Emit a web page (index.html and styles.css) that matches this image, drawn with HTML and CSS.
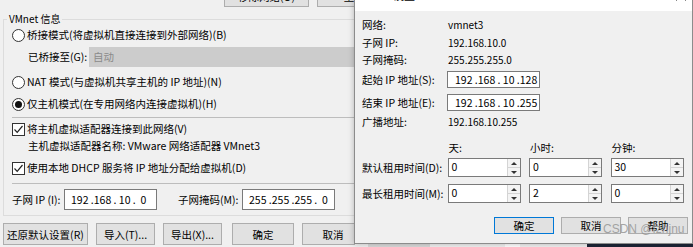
FILE: index.html
```html
<!DOCTYPE html>
<html lang="zh-CN">
<head>
    <meta charset="UTF-8">
    <meta name="viewport" content="width=device-width, initial-scale=1.0">
    <link rel="stylesheet" href="styles.css">
    <title>虚拟网络编辑器 - DHCP 设置</title>
</head>
<body>
    <div class="editor">
        <div class="top-buttons">
            <button class="btn top-btn">移除网络(O)</button>
            <button class="btn top-btn">重命名</button>
        </div>

        <fieldset class="group">
            <legend>VMnet 信息</legend>
            <div class="row opt-row">
                <span class="radio"></span>桥接模式(将虚拟机直接连接到外部网络)(B)
            </div>
            <div class="row bridged-row">
                <span class="bridged-label">已桥接至(G):</span>
                <div class="select">自动</div>
            </div>
            <div class="row opt-row nat-row">
                <span class="radio"></span>NAT 模式(与虚拟机共享主机的 IP 地址)(N)
            </div>
            <div class="row opt-row host-row">
                <span class="radio on"></span>仅主机模式(在专用网络内连接虚拟机)(H)
            </div>
            <div class="sep sep-a"></div>
            <div class="row opt-row cb-row">
                <span class="check"><svg width="11" height="11" viewBox="0 0 11 11"><polyline points="1.5,5.5 4.2,8.3 9.5,2" fill="none" stroke="#222" stroke-width="1.2"/></svg></span>将主机虚拟适配器连接到此网络(V)
            </div>
            <div class="row adapter-row">主机虚拟适配器名称: VMware 网络适配器 VMnet3</div>
            <div class="row opt-row dhcp-row">
                <span class="check"><svg width="11" height="11" viewBox="0 0 11 11"><polyline points="1.5,5.5 4.2,8.3 9.5,2" fill="none" stroke="#222" stroke-width="1.2"/></svg></span>使用本地 DHCP 服务将 IP 地址分配给虚拟机(D)
            </div>
            <div class="sep sep-b"></div>
            <div class="row subnet-row">
                <span class="subnet-label">子网 IP (I):</span>
                <div class="ip">192 .168 . 10 .  0</div>
                <span class="mask-label">子网掩码(M):</span>
                <div class="ip">255 .255 .255 .  0</div>
            </div>
        </fieldset>

        <div class="bottom-buttons">
            <button class="btn wide">还原默认设置(R)</button>
            <button class="btn">导入(T)...</button>
            <button class="btn">导出(X)...</button>
            <button class="btn ok">确定</button>
            <button class="btn ok-next">取消</button>
        </div>
    </div>

    <div class="strip"></div>

    <div class="dialog">
        <div class="title-bar">
            <span>DHCP 设置</span>
            <svg class="close" width="10" height="10" viewBox="0 0 10 10"><path d="M0.5 0.5 L9.5 9.5 M9.5 0.5 L0.5 9.5" stroke="#111" stroke-width="1"/></svg>
        </div>
        <div class="dialog-body">
            <div class="drow r-net"><span>网络:</span><span class="val">vmnet3</span></div>
            <div class="drow r-ip"><span>子网 IP:</span><span class="val">192.168.10.0</span></div>
            <div class="drow r-mask"><span>子网掩码:</span><span class="val">255.255.255.0</span></div>
            <div class="drow r-start"><span>起始 IP 地址(S):</span><div class="ip dip">192 .168 . 10 .128</div></div>
            <div class="drow r-end"><span>结束 IP 地址(E):</span><div class="ip dip">192 .168 . 10 .255</div></div>
            <div class="drow r-bcast"><span>广播地址:</span><span class="val">192.168.10.255</span></div>

            <div class="lease r-head">
                <span></span>
                <span class="head">天:</span>
                <span class="head">小时:</span>
                <span class="head">分钟:</span>
            </div>
            <div class="lease r-def">
                <span>默认租用时间(D):</span>
                <div class="spin"><span class="spin-val">0</span><span class="spin-btns"><i class="up"></i><i class="down"></i></span></div>
                <div class="spin"><span class="spin-val">0</span><span class="spin-btns"><i class="up"></i><i class="down"></i></span></div>
                <div class="spin"><span class="spin-val">30</span><span class="spin-btns"><i class="up"></i><i class="down"></i></span></div>
            </div>
            <div class="lease r-max">
                <span>最长租用时间(M):</span>
                <div class="spin"><span class="spin-val">0</span><span class="spin-btns"><i class="up"></i><i class="down"></i></span></div>
                <div class="spin"><span class="spin-val">2</span><span class="spin-btns"><i class="up"></i><i class="down"></i></span></div>
                <div class="spin"><span class="spin-val">0</span><span class="spin-btns"><i class="up"></i><i class="down"></i></span></div>
            </div>

            <div class="dialog-buttons">
                <button class="btn dbtn focused">确定</button>
                <button class="btn dbtn">取消</button>
                <button class="btn dbtn">帮助</button>
            </div>
        </div>
    </div>

    <div class="watermark">CSDN @fzhjnu</div>
</body>
</html>
```

FILE: styles.css
```css
body {
    margin: 0;
    width: 693px;
    height: 247px;
    overflow: hidden;
    position: relative;
    background: #f0f0f0;
    font-family: "Noto Sans CJK SC", "Liberation Sans", sans-serif;
    font-size: 10.5px;
    line-height: 16px;
    color: #000;
}

.btn {
    font-family: "Noto Sans CJK SC", "Liberation Sans", sans-serif;
    font-size: 10.5px;
    color: #000;
    background: #e1e1e1;
    border: 1px solid #adadad;
    padding: 0;
    margin: 0;
}

/* left window */
.editor {
    width: 693px;
}

.top-buttons {
    height: 12px;
    overflow: hidden;
    display: flex;
    gap: 8px;
    padding-left: 224px;
}

.top-btn {
    width: 85px;
    height: 22px;
    margin-top: -15px;
    flex: none;
}

.group {
    width: 430px;
    margin: 0 0 0 3px;
    padding: 0 0 5px 0;
    border: 1px solid #dcdcdc;
    min-width: 0;
}

.group legend {
    line-height: 14px;
    padding: 0 2px;
    margin-left: 3px;
    font-size: 10px;
}

.row {
    display: flex;
    align-items: center;
    padding-left: 8px;
    white-space: nowrap;
}

.opt-row {
    height: 18px;
}

.radio {
    width: 13px;
    height: 13px;
    box-sizing: border-box;
    border: 1px solid #333;
    border-radius: 50%;
    background: #fff;
    margin-right: 2px;
    display: flex;
    align-items: center;
    justify-content: center;
    flex: none;
}

.radio.on::after {
    content: "";
    width: 7px;
    height: 7px;
    border-radius: 50%;
    background: #111;
}

.check {
    width: 13px;
    height: 13px;
    box-sizing: border-box;
    border: 1px solid #333;
    background: #fff;
    margin-right: 2px;
    display: flex;
    align-items: center;
    justify-content: center;
    flex: none;
}

.bridged-row {
    height: 20px;
    margin-top: 3px;
    padding-left: 24px;
}

.bridged-label {
    width: 61px;
}

.select {
    flex: 1;
    height: 20px;
    background: #cccccc;
    color: #8a8a8a;
    line-height: 20px;
    padding-left: 4px;
}

.nat-row {
    margin-top: 6px;
}

.host-row {
    margin-top: 4px;
}

.sep {
    height: 1px;
    background: #bdbdbd;
    margin-left: 8px;
}

.sep-a {
    margin-top: 4px;
}

.cb-row {
    margin-top: 2px;
}

.adapter-row {
    height: 16px;
    padding-left: 24px;
}

.dhcp-row {
    margin-top: 5px;
}

.sep-b {
    margin-top: 6px;
}

.subnet-row {
    height: 21px;
    margin-top: 5px;
}

.subnet-label {
    width: 52px;
}

.mask-label {
    margin-left: 21px;
    width: 64px;
}

.ip {
    width: 93px;
    height: 21px;
    box-sizing: border-box;
    border: 1px solid #7a7a7a;
    background: #fff;
    white-space: pre;
    padding-left: 6px;
    line-height: 19px;
    font-size: 10.5px;
}

.bottom-buttons {
    display: flex;
    gap: 8px;
    padding-left: 3px;
    margin-top: 7px;
}

.bottom-buttons .btn {
    width: 59px;
    height: 22px;
    flex: none;
}

.bottom-buttons .wide {
    width: 85px;
}

.bottom-buttons .ok {
    width: 62px;
    margin-left: 2px;
}

.bottom-buttons .ok-next {
    width: 62px;
}

/* desktop strip under the dialog */
.strip {
    position: absolute;
    left: 355px;
    top: 243px;
    width: 338px;
    height: 4px;
    background: linear-gradient(to right, #f0f0f0 0, #f0f0f0 13px, #d9d9d9 13px, #d9d9d9 75px, #f0f0f0 75px, #f0f0f0 150px, #fff 150px, #fff 165px, #f0f0f0 165px, #f0f0f0 232px, #1d2436 232px);
}

/* DHCP dialog */
.dialog {
    position: absolute;
    left: 354px;
    top: -20px;
    width: 337px;
    height: 262px;
    border: 1px solid #8c8c8c;
    background: #f0f0f0;
    box-shadow: 0 0 6px rgba(0, 0, 0, 0.25);
}

.title-bar {
    height: 30px;
    box-sizing: border-box;
    background: #fff;
    display: flex;
    align-items: flex-start;
    justify-content: space-between;
    padding: 6px 6px 0 6px;
    font-size: 11px;
}

.close {
    margin-top: 4px;
}

.dialog-body {
    padding: 0 4px 0 7px;
}

.drow {
    display: grid;
    grid-template-columns: 85px 1fr;
    align-items: center;
    height: 16px;
    white-space: nowrap;
}

.drow .val {
    padding-left: 1px;
    font-size: 10px;
}

.r-net { margin-top: 6px; }
.r-ip { margin-top: 2px; }
.r-mask { margin-top: 1px; }
.r-start { margin-top: 3px; height: 17px; }
.r-end { margin-top: 6px; height: 17px; }
.r-bcast { margin-top: 3px; }

.dip {
    height: 17px;
    line-height: 15px;
    padding-left: 7px;
}

.lease {
    display: grid;
    grid-template-columns: 77px 73px 73px 73px;
    column-gap: 8.5px;
    align-items: center;
    white-space: nowrap;
}

.r-head {
    height: 16px;
    margin-top: 10px;
}

.head {
    padding-left: 1px;
}

.r-def {
    height: 19px;
    margin-top: 2px;
}

.r-max {
    height: 19px;
    margin-top: 7px;
}

.spin {
    height: 19px;
    box-sizing: border-box;
    border: 1px solid #7a7a7a;
    background: #fff;
    display: flex;
    justify-content: space-between;
}

.spin-val {
    padding-left: 3px;
    line-height: 15px;
    font-size: 10.5px;
}

.spin-btns {
    width: 12px;
    display: flex;
    flex-direction: column;
    border-left: 1px solid #d4d4d4;
    background: #f4f4f4;
}

.spin-btns i {
    flex: 1;
    display: flex;
    align-items: center;
    justify-content: center;
}

.spin-btns .up {
    border-bottom: 1px solid #d4d4d4;
}

.spin-btns .up::after {
    content: "";
    border-left: 3px solid transparent;
    border-right: 3px solid transparent;
    border-bottom: 3px solid #333;
}

.spin-btns .down::after {
    content: "";
    border-left: 3px solid transparent;
    border-right: 3px solid transparent;
    border-top: 3px solid #333;
}

.dialog-buttons {
    display: flex;
    justify-content: flex-end;
    gap: 7px;
    margin-top: 14px;
}

.dbtn {
    width: 60px;
    height: 17px;
    line-height: 15px;
}

.dbtn.focused {
    border-color: #0078d7;
}

.watermark {
    position: absolute;
    left: 603px;
    top: 221px;
    font-family: "Liberation Sans", sans-serif;
    font-size: 12px;
    color: rgba(140, 140, 140, 0.75);
    white-space: nowrap;
}
```
